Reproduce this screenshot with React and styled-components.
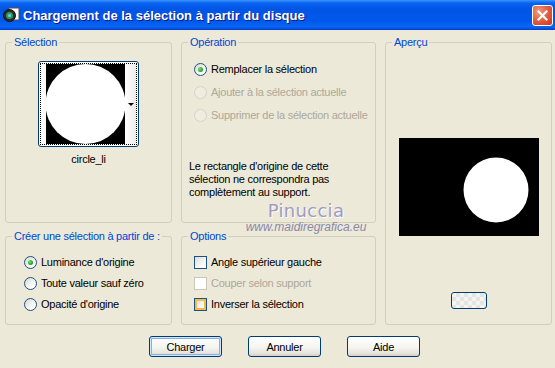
import styled, { createGlobalStyle } from "styled-components";

const Global = createGlobalStyle`
  html, body { margin: 0; padding: 0; }
  body {
    width: 555px;
    height: 368px;
    overflow: hidden;
    font-family: "Liberation Sans", Arial, sans-serif;
    font-size: 11px;
    letter-spacing: -0.25px;
  }
`;

const Window = styled.div`
  position: relative;
  width: 555px;
  height: 368px;
  background: #ece9d8;
  display: flex;
  flex-direction: column;
`;

const TitleBar = styled.div`
  height: 30px;
  flex-shrink: 0;
  display: flex;
  align-items: center;
  padding: 0 2px 0 3px;
  box-sizing: border-box;
  background: linear-gradient(
    to bottom,
    #3d95ff 0%,
    #0a64f0 10%,
    #0055e5 30%,
    #0058ea 70%,
    #0a66f4 90%,
    #003dc8 100%
  );
`;

const TitleText = styled.div`
  flex: 1;
  margin-left: 3px;
  color: #fff;
  font: bold 13px "Liberation Sans", Arial, sans-serif;
  letter-spacing: 0;
  text-shadow: 1px 1px 0 #0a1883;
  white-space: nowrap;
`;

const CloseButton = styled.div`
  width: 21px;
  height: 21px;
  box-sizing: border-box;
  border: 1px solid #fff;
  border-radius: 3px;
  background: radial-gradient(circle at 30% 30%, #f09a7c, #e2573a 55%, #c9391e);
  display: flex;
  align-items: center;
  justify-content: center;
`;

const Body = styled.div`
  flex: 1;
  padding: 6px 3px 0 5px;
  display: flex;
  flex-direction: column;
`;

const Grid = styled.div`
  display: grid;
  grid-template-columns: 167px 195px 167px;
  grid-template-rows: 187px 95px;
  column-gap: 9px;
  row-gap: 7px;
`;

const Group = styled.fieldset`
  margin: 0;
  padding: 0;
  min-width: 0;
  border: 1px solid #d0d0bf;
  border-radius: 3px;
  grid-row: ${(p) => (p.$tall ? "1 / span 2" : "auto")};
  grid-column: ${(p) => p.$col};
  display: flex;
  flex-direction: column;
  align-items: ${(p) => (p.$center ? "center" : "stretch")};
`;

const Legend = styled.legend`
  margin-left: 6px;
  padding: 0 2px;
  color: #0046d5;
  font-size: 11px;
  line-height: 13px;
`;

const Thumb = styled.div`
  margin-top: 12px;
  width: 101px;
  height: 86px;
  box-sizing: border-box;
  border: 1px solid #003c74;
  border-radius: 3px;
  background: #fff;
  padding: 1px;
  display: flex;
`;

const ThumbInner = styled.div`
  flex: 1;
  border: 1px dotted #000;
  display: flex;
  align-items: center;
  padding-left: 5px;
`;

const ThumbStrip = styled.div`
  flex: 1;
  align-self: stretch;
  background: linear-gradient(to right, #ffffff, #ecebe6);
  display: flex;
  align-items: center;
  justify-content: flex-end;
  padding-right: 2px;
`;

const Arrow = styled.span`
  width: 0;
  height: 0;
  border-left: 3px solid transparent;
  border-right: 3px solid transparent;
  border-top: 3px solid #000;
`;

const Caption = styled.div`
  margin-top: 6px;
  line-height: 13px;
  color: #000;
`;

const Options = styled.div`
  display: flex;
  flex-direction: column;
  gap: ${(p) => p.$gap}px;
  padding: ${(p) => p.$pad};
`;

const Row = styled.label`
  display: flex;
  align-items: center;
  gap: 4px;
  height: 13px;
  line-height: 13px;
  color: ${(p) => (p.$disabled ? "#aca899" : "#000")};
  white-space: nowrap;
`;

const Radio = styled.span`
  width: 13px;
  height: 13px;
  box-sizing: border-box;
  border-radius: 50%;
  flex-shrink: 0;
  border: 1px solid ${(p) => (p.$disabled ? "#d6d3c5" : "#1c5180")};
  background: ${(p) =>
    p.$disabled ? "#efede2" : "linear-gradient(135deg, #d8d8d2, #ffffff 75%)"};
  display: flex;
  align-items: center;
  justify-content: center;
  &::after {
    content: "";
    display: ${(p) => (p.$checked ? "block" : "none")};
    width: 5px;
    height: 5px;
    border-radius: 50%;
    background: radial-gradient(circle at 35% 35%, #6ee06a, #21a121 70%);
  }
`;

const Check = styled.span`
  width: 13px;
  height: 13px;
  box-sizing: border-box;
  flex-shrink: 0;
  border: 1px solid ${(p) => (p.$disabled ? "#cac8bb" : "#1c5180")};
  background: ${(p) =>
    p.$disabled ? "#ffffff" : "linear-gradient(135deg, #dcdcd7, #ffffff 80%)"};
  box-shadow: ${(p) => (p.$hot ? "inset 0 0 0 2px #f8b84a" : "none")};
`;

const Note = styled.div`
  margin-top: 38px;
  padding-left: 7px;
  line-height: 13px;
  color: #000;
`;

const Preview = styled.div`
  margin-top: 89px;
  line-height: 0;
`;

const SmallButton = styled.div`
  margin-top: 56px;
  width: 36px;
  height: 17px;
  box-sizing: border-box;
  border: 1px solid #003c74;
  border-radius: 3px;
  background-color: #f4f4f2;
  background-image: linear-gradient(45deg, #e4e4e0 25%, transparent 25%, transparent 75%, #e4e4e0 75%),
    linear-gradient(45deg, #e4e4e0 25%, transparent 25%, transparent 75%, #e4e4e0 75%);
  background-size: 8px 8px;
  background-position: 0 0, 4px 4px;
`;

const ButtonRow = styled.div`
  margin-top: 11px;
  padding-left: 144px;
  display: flex;
  gap: 26px;
`;

const Button = styled.button`
  width: 73px;
  height: 21px;
  padding: 0;
  font: 11px "Liberation Sans", Arial, sans-serif;
  letter-spacing: -0.25px;
  color: #000;
  border: 1px solid #003c74;
  border-radius: 3px;
  background: linear-gradient(#ffffff, #f4f4f0 55%, #e6e4dc 85%, #d6d0c5);
  box-shadow: ${(p) =>
    p.$default ? "inset 0 0 0 1px #cee7ff, inset 0 0 0 2px #89ade4" : "none"};
`;

const Watermark = styled.div`
  position: absolute;
  left: 246px;
  top: 200px;
  width: 120px;
  display: flex;
  flex-direction: column;
  align-items: center;
  pointer-events: none;
`;

const WmName = styled.div`
  font: 18px "DejaVu Sans", sans-serif;
  letter-spacing: 0.3px;
  color: #9e9cc4;
  text-shadow: 1px 1px 0 #ffffff;
  line-height: 21px;
`;

const WmUrl = styled.div`
  font: italic 12px "Liberation Sans", Arial, sans-serif;
  letter-spacing: 0;
  color: #8a88a8;
  line-height: 13px;
`;

function DiskIcon() {
  return (
    <svg width="17" height="16" viewBox="0 0 17 16">
      <rect x="6" y="1" width="10" height="12" fill="#fff" stroke="#555" />
      <circle cx="6.5" cy="8.5" r="6" fill="#2a2a2a" stroke="#111" />
      <circle cx="6.5" cy="8.5" r="3.5" fill="#3c6" opacity="0.7" />
      <circle cx="6.5" cy="8.5" r="1.5" fill="#6cf" />
    </svg>
  );
}

function CloseX() {
  return (
    <svg width="11" height="11" viewBox="0 0 11 11">
      <path d="M1.5 1.5 L9.5 9.5 M9.5 1.5 L1.5 9.5" stroke="#fff" strokeWidth="2.2" strokeLinecap="square" />
    </svg>
  );
}

export default function App() {
  return (
    <Window>
      <Global />
      <TitleBar>
        <DiskIcon />
        <TitleText>Chargement de la sélection à partir du disque</TitleText>
        <CloseButton>
          <CloseX />
        </CloseButton>
      </TitleBar>
      <Body>
        <Grid>
          <Group $col="1" $center>
            <Legend>Sélection</Legend>
            <Thumb>
              <ThumbInner>
                <svg width="79" height="80" viewBox="0 0 79 80">
                  <rect width="79" height="80" fill="#000" />
                  <circle cx="39.5" cy="40" r="40" fill="#fff" />
                </svg>
                <ThumbStrip>
                  <Arrow />
                </ThumbStrip>
              </ThumbInner>
            </Thumb>
            <Caption>circle_li</Caption>
          </Group>

          <Group $col="2">
            <Legend>Opération</Legend>
            <Options $gap={10} $pad="14px 0 0 12px">
              <Row>
                <Radio $checked />
                Remplacer la sélection
              </Row>
              <Row $disabled>
                <Radio $disabled />
                Ajouter à la sélection actuelle
              </Row>
              <Row $disabled>
                <Radio $disabled />
                Supprimer de la sélection actuelle
              </Row>
            </Options>
            <Note>
              Le rectangle d'origine de cette
              <br />
              sélection ne correspondra pas
              <br />
              complètement au support.
            </Note>
          </Group>

          <Group $col="3" $tall $center>
            <Legend>Aperçu</Legend>
            <Preview>
              <svg width="140" height="98" viewBox="0 0 140 98">
                <rect width="140" height="98" fill="#000" />
                <circle cx="97" cy="52" r="32.5" fill="#fff" />
              </svg>
            </Preview>
            <SmallButton />
          </Group>

          <Group $col="1">
            <Legend>Créer une sélection à partir de :</Legend>
            <Options $gap={8} $pad="13px 0 0 18px">
              <Row>
                <Radio $checked />
                Luminance d'origine
              </Row>
              <Row>
                <Radio />
                Toute valeur sauf zéro
              </Row>
              <Row>
                <Radio />
                Opacité d'origine
              </Row>
            </Options>
          </Group>

          <Group $col="2">
            <Legend>Options</Legend>
            <Options $gap={8} $pad="13px 0 0 12px">
              <Row>
                <Check />
                Angle supérieur gauche
              </Row>
              <Row $disabled>
                <Check $disabled />
                Couper selon support
              </Row>
              <Row>
                <Check $hot />
                Inverser la sélection
              </Row>
            </Options>
          </Group>
        </Grid>
        <ButtonRow>
          <Button $default>Charger</Button>
          <Button>Annuler</Button>
          <Button>Aide</Button>
        </ButtonRow>
      </Body>
      <Watermark>
        <WmName>Pinuccia</WmName>
        <WmUrl>www.maidiregrafica.eu</WmUrl>
      </Watermark>
    </Window>
  );
}
